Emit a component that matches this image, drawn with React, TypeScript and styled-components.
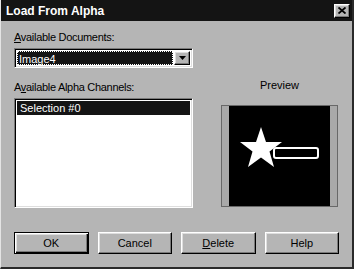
import React from "react";
import styled, { createGlobalStyle } from "styled-components";

const Global = createGlobalStyle`
  html, body { margin: 0; padding: 0; background: #b5b5b5; }
  body { font-family: "Liberation Sans", Arial, sans-serif; font-size: 11px; color: #000; }
`;

const Window = styled.div`
  width: 354px;
  height: 269px;
  box-sizing: border-box;
  background: #b5b5b5;
  border-left: 1px solid #e4e4e4;
  border-right: 2px solid #2a2a2a;
  border-bottom: 2px solid #2a2a2a;
  display: flex;
  flex-direction: column;
`;

const TitleBar = styled.div`
  height: 21px;
  flex: none;
  background: #141414;
  color: #fff;
  display: flex;
  align-items: center;
  justify-content: space-between;
  padding: 0 2px 0 5px;
  font-weight: bold;
  font-size: 12px;
`;

const Bevel = `
  background: #b5b5b5;
  border-top: 1px solid #fff;
  border-left: 1px solid #fff;
  border-right: 1px solid #000;
  border-bottom: 1px solid #000;
  box-shadow: inset -1px -1px 0 #7a7a7a, inset 1px 1px 0 #dedede;
`;

const CloseButton = styled.div`
  ${Bevel}
  width: 16px;
  height: 14px;
  box-sizing: border-box;
  display: flex;
  align-items: center;
  justify-content: center;
`;

const Body = styled.div`
  padding: 10px 13px 0 13px;
  display: flex;
  flex-direction: column;
`;

const Columns = styled.div`
  display: flex;
  gap: 28px;
`;

const LeftCol = styled.div`
  width: 179px;
  display: flex;
  flex-direction: column;
`;

const RightCol = styled.div`
  width: 117px;
  display: flex;
  flex-direction: column;
  align-items: stretch;
  padding-top: 48px;
`;

const Label = styled.div<{ $top?: number }>`
  height: 13px;
  line-height: 13px;
  letter-spacing: -0.3px;
  margin-top: ${(p) => p.$top ?? 0}px;
  margin-bottom: 4px;
  white-space: nowrap;
`;

const Mn = styled.span`
  text-decoration: underline;
  text-underline-offset: 1px;
`;

const Sunken = `
  box-sizing: border-box;
  border-top: 1px solid #7a7a7a;
  border-left: 1px solid #7a7a7a;
  border-right: 1px solid #fff;
  border-bottom: 1px solid #fff;
  box-shadow: inset 1px 1px 0 #000, inset -1px -1px 0 #dedede;
`;

const Combo = styled.div`
  ${Sunken}
  height: 20px;
  background: #fff;
  padding: 2px;
  display: flex;
`;

const ComboField = styled.div`
  flex: 1;
  margin-right: 1px;
  background: #141414;
  color: #fff;
  border: 1px dotted #fff;
  padding-left: 1px;
  line-height: 14px;
  font-size: 11px;
`;

const DropButton = styled.div`
  ${Bevel}
  width: 16px;
  box-sizing: border-box;
  display: flex;
  align-items: center;
  justify-content: center;
`;

const ListBox = styled.div`
  ${Sunken}
  height: 110px;
  background: #fff;
  padding: 2px;
`;

const ListItem = styled.div<{ $selected?: boolean }>`
  height: 14px;
  line-height: 14px;
  padding-left: 3px;
  background: ${(p) => (p.$selected ? "#141414" : "transparent")};
  color: ${(p) => (p.$selected ? "#fff" : "#000")};
`;

const PreviewLabel = styled.div`
  height: 13px;
  line-height: 13px;
  text-align: center;
`;

const PreviewFrame = styled.div`
  margin-top: 13px;
  height: 102px;
  box-sizing: border-box;
  border: 1px solid #686868;
  display: flex;
  background: #a9a9a9;
  padding: 0 7px;
`;

const PreviewCanvas = styled.div`
  flex: 1;
  background: #000;
  display: flex;
`;

const ButtonRow = styled.div`
  margin-top: 24px;
  display: flex;
  gap: 9px;
`;

const Button = styled.div<{ $default?: boolean }>`
  width: 75px;
  height: 22px;
  box-sizing: border-box;
  background: #b5b5b5;
  display: flex;
  align-items: center;
  justify-content: center;
  font-size: 11px;
  ${(p) =>
    p.$default
      ? `
    border: 1px solid #000;
    box-shadow: inset 1px 1px 0 #fff, inset -1px -1px 0 #000, inset -2px -2px 0 #7a7a7a, inset 2px 2px 0 #dedede;
  `
      : `
    border-top: 1px solid #fff;
    border-left: 1px solid #fff;
    border-right: 1px solid #000;
    border-bottom: 1px solid #000;
    box-shadow: inset -1px -1px 0 #7a7a7a, inset 1px 1px 0 #dedede;
  `}
`;

export default function App() {
  return (
    <>
      <Global />
      <Window>
        <TitleBar>
          <span>Load From Alpha</span>
          <CloseButton>
            <svg width="8" height="7" viewBox="0 0 8 7">
              <path d="M0.5 0.5 L7.5 6.5 M7.5 0.5 L0.5 6.5" stroke="#000" strokeWidth="1.8" />
            </svg>
          </CloseButton>
        </TitleBar>
        <Body>
          <Columns>
            <LeftCol>
              <Label>
                <Mn>A</Mn>vailable Documents:
              </Label>
              <Combo>
                <ComboField>Image4</ComboField>
                <DropButton>
                  <svg width="7" height="4" viewBox="0 0 7 4">
                    <path d="M0 0 H7 L3.5 4 Z" fill="#000" />
                  </svg>
                </DropButton>
              </Combo>
              <Label $top={13}>
                A<Mn>v</Mn>ailable Alpha Channels:
              </Label>
              <ListBox>
                <ListItem $selected>Selection #0</ListItem>
              </ListBox>
            </LeftCol>
            <RightCol>
              <PreviewLabel>Preview</PreviewLabel>
              <PreviewFrame>
                <PreviewCanvas>
                  <svg width="101" height="100" viewBox="0 0 101 100">
                    <rect x="45" y="42" width="44" height="10" rx="2" fill="#000" stroke="#fff" strokeWidth="2" />
                    <path
                      d="M32 21 L37 36 L53 36 L40.5 45.5 L45 61 L32 51.5 L19 61 L23.5 45.5 L11 36 L27 36 Z"
                      fill="#fff"
                    />
                  </svg>
                </PreviewCanvas>
              </PreviewFrame>
            </RightCol>
          </Columns>
          <ButtonRow>
            <Button $default>OK</Button>
            <Button>Cancel</Button>
            <Button>
              <span>
                <Mn>D</Mn>elete
              </span>
            </Button>
            <Button>Help</Button>
          </ButtonRow>
        </Body>
      </Window>
    </>
  );
}
